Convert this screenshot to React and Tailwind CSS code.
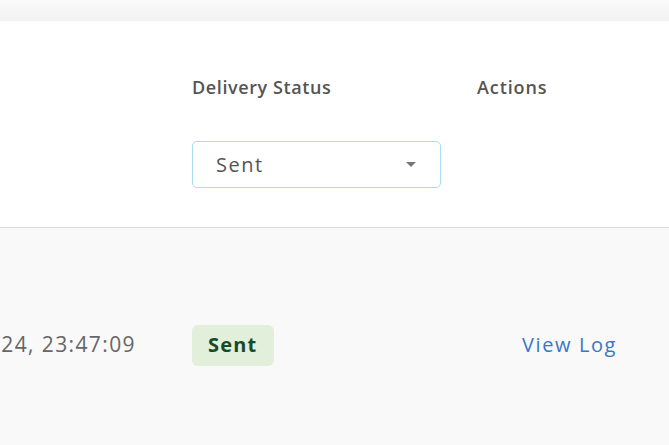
export default function App() {
  return (
    <div className="w-[669px] h-[445px] overflow-hidden bg-[#f9f9f9] font-['Open_Sans',sans-serif]">
      <div className="h-[21px] bg-gradient-to-b from-[#fbfbfb] to-[#f1f1f1]" />
      <div className="h-[207px] bg-white border-b border-[#d9d9d9] flex">
        <div className="w-[192px] shrink-0" />
        <div className="w-[285px] shrink-0 pt-[55px]">
          <div className="text-[18px] leading-[22px] font-semibold tracking-[0.6px] text-[#555]">Delivery Status</div>
          <div className="mt-[43px] w-[249px] h-[47px] border border-[#a9def2] rounded-[5px] flex items-center justify-between pl-[23px] pr-[24px]">
            <span className="text-[20px] text-[#555] tracking-[1.5px]">Sent</span>
            <svg width="10" height="5" viewBox="0 0 10 5"><path d="M0 0h10L5 5z" fill="#777" /></svg>
          </div>
        </div>
        <div className="pt-[55px]">
          <div className="text-[18px] leading-[22px] font-semibold tracking-[0.9px] text-[#555]">Actions</div>
        </div>
      </div>
      <div className="flex items-center h-[234px]">
        <div className="w-[192px] shrink-0 flex justify-end pr-[56px] overflow-hidden whitespace-nowrap">
          <span className="text-[21px] text-[#666] tracking-[1.4px]">Jan 05, 2024, 23:47:09</span>
        </div>
        <div className="w-[330px] shrink-0">
          <span className="inline-flex items-center h-[41px] pl-[16px] pr-[17px] rounded-[6px] bg-[#e1efdb] text-[20px] font-bold tracking-[1.2px] text-[#174a27]">Sent</span>
        </div>
        <div className="text-[20px] text-[#3b76c4] tracking-[1.6px]">View Log</div>
      </div>
    </div>
  );
}
